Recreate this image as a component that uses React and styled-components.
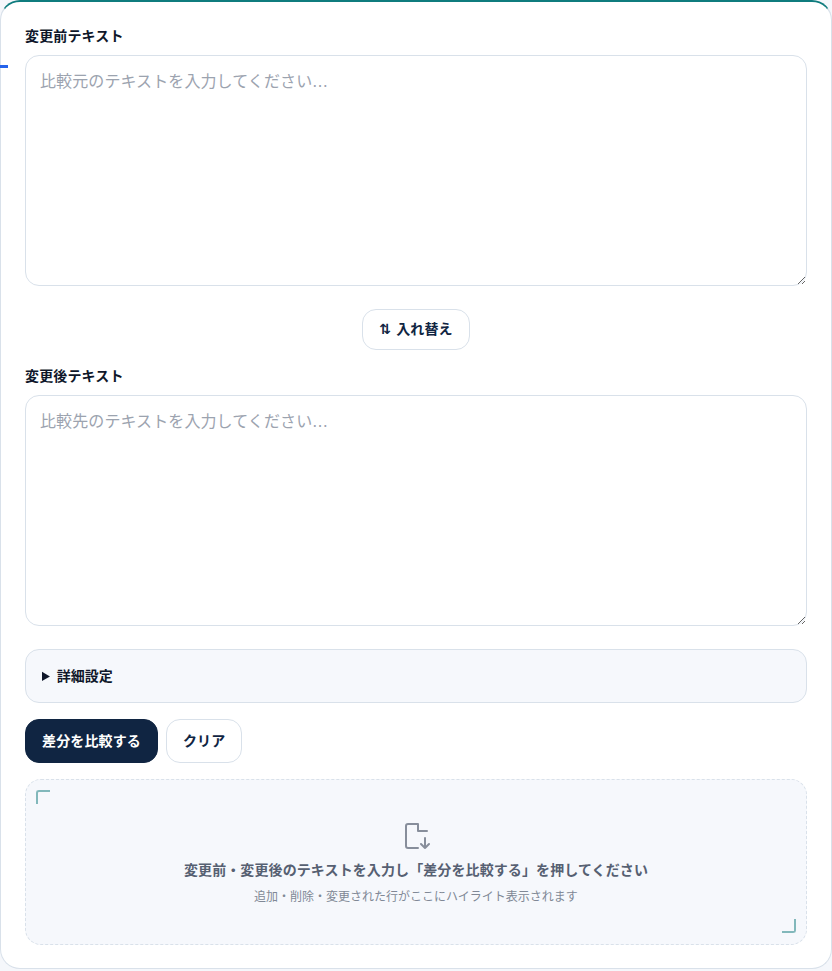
import React from "react";
import styled, { createGlobalStyle } from "styled-components";

const fontStack = `"DejaVu Sans", "Noto Sans CJK JP", sans-serif`;

const GlobalStyle = createGlobalStyle`
  * {
    box-sizing: border-box;
  }

  body {
    margin: 0;
    background: #f5f7fb;
    color: #0f172a;
    font-family: ${fontStack};
  }
`;

const Card = styled.main`
  position: relative;
  height: 969px;
  padding: 25px 24px 24px;
  background: #fff;
  border: 1px solid #d9e1ea;
  border-top: 2px solid #0f7c7e;
  border-radius: 20px;
`;

const BlueTick = styled.span`
  position: absolute;
  left: -1px;
  top: 63px;
  width: 8px;
  height: 3px;
  background: #2563eb;
`;

const Field = styled.div`
  display: flex;
  flex-direction: column;
  gap: 9px;
`;

const Label = styled.label`
  height: 19px;
  font-size: 14px;
  line-height: 19px;
  font-weight: 700;
  letter-spacing: 0.01em;
  color: #0f172a;
`;

const TextArea = styled.textarea`
  display: block;
  width: 100%;
  height: 231px;
  padding: 13px 14px;
  background: #fff;
  border: 1px solid #d9e1ea;
  border-radius: 14px;
  font: 400 16px/1.6 ${fontStack};
  letter-spacing: 0.1px;
  color: #0f172a;
  outline: none;

  &::placeholder {
    color: #9ca3af;
    opacity: 1;
  }
`;

const SwapRow = styled.div`
  display: flex;
  justify-content: center;
  margin: 23px 0 17px;
`;

const Button = styled.button`
  height: ${(p) => p.$height}px;
  padding: 0 16px ${(p) => (p.$raised ? 1 : 0)}px;
  background: ${(p) => (p.$primary ? "#102542" : "#fff")};
  color: ${(p) => (p.$primary ? "#fff" : "#102542")};
  border: 1px solid ${(p) => (p.$primary ? "#102542" : "#d9e1ea")};
  border-radius: 14px;
  font: 700 14px/20px ${fontStack};
  letter-spacing: 0.01em;
`;

const Details = styled.details`
  margin-top: 23px;
  background: #f6f8fc;
  border: 1px solid #d9e1ea;
  border-radius: 14px;
`;

const Summary = styled.summary`
  height: 52px;
  padding: 0 16px;
  font-size: 14px;
  line-height: 52px;
  font-weight: 700;
  color: #0f172a;
`;

const Actions = styled.div`
  display: flex;
  gap: 8px;
  margin-top: 16px;
`;

const Empty = styled.section`
  position: relative;
  display: flex;
  flex-direction: column;
  align-items: center;
  height: 166px;
  margin-top: 16px;
  padding-top: 42px;
  background: #f6f8fc;
  border: 1px dashed #d9e1ea;
  border-radius: 16px;
`;

const Corner = styled.span`
  position: absolute;
  width: 14px;
  height: 14px;
  border: 0 solid #82b8bb;
  ${(p) =>
    p.$end
      ? `right: 10px; bottom: 11px; border-width: 0 2px 2px 0; border-bottom-right-radius: 3px;`
      : `left: 10px; top: 10px; border-width: 2px 0 0 2px; border-top-left-radius: 3px;`}
`;

const EmptyIcon = styled.svg`
  display: block;
  width: 28px;
  height: 28px;
  fill: none;
  stroke: #878e9b;
  stroke-width: 2;
  stroke-linecap: round;
  stroke-linejoin: round;
`;

const EmptyTitle = styled.p`
  margin: 8px 0 0;
  font-size: 14px;
  line-height: 24px;
  font-weight: 700;
  letter-spacing: 0.1px;
  color: #566072;
`;

const EmptyText = styled.p`
  margin: 5px 0 0;
  font-size: 12px;
  line-height: 20px;
  color: #808896;
`;

export default function App() {
  return (
    <>
      <GlobalStyle />
      <Card>
        <BlueTick />
        <Field>
          <Label htmlFor="before">変更前テキスト</Label>
          <TextArea id="before" placeholder="比較元のテキストを入力してください..." />
        </Field>
        <SwapRow>
          <Button $height={41} $raised>⇅ 入れ替え</Button>
        </SwapRow>
        <Field>
          <Label htmlFor="after">変更後テキスト</Label>
          <TextArea id="after" placeholder="比較先のテキストを入力してください..." />
        </Field>
        <Details>
          <Summary>詳細設定</Summary>
        </Details>
        <Actions>
          <Button $primary $height={44}>差分を比較する</Button>
          <Button $height={44}>クリア</Button>
        </Actions>
        <Empty>
          <Corner />
          <Corner $end />
          <EmptyIcon viewBox="0 0 28 28">
            <path d="M16 26H6a2 2 0 0 1-2-2V4a2 2 0 0 1 2-2h10v7h9" />
            <path d="M23 16v10M19 22l4 4 4-4" />
          </EmptyIcon>
          <EmptyTitle>変更前・変更後のテキストを入力し「差分を比較する」を押してください</EmptyTitle>
          <EmptyText>追加・削除・変更された行がここにハイライト表示されます</EmptyText>
        </Empty>
      </Card>
    </>
  );
}
